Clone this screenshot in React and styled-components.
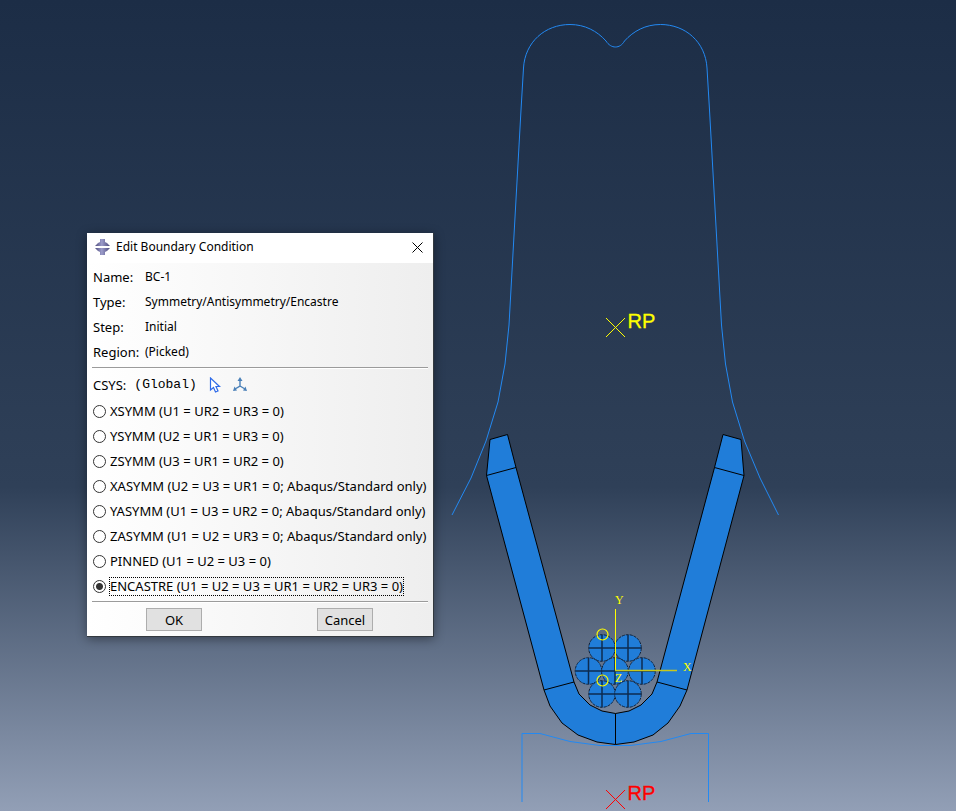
import React, {useState} from "react";
import styled, {createGlobalStyle} from "styled-components";

const GlobalStyle = createGlobalStyle`
  * {
    box-sizing: border-box;
  }
  body {
    margin: 0;
    overflow: hidden;
    font-family: "Noto Sans", "Open Sans", sans-serif;
    font-size: 13px;
    line-height: 18px;
    color: #000;
  }
`;

const Viewport = styled.main`
  position: relative;
  height: 100vh;
  background: linear-gradient(#1c2d46 0%, #2f4058 60%, #929fb6 100%);
`;

const Canvas = styled.svg`
  display: block;
  width: 100%;
  height: 100%;
`;

const Wire = styled.path`
  fill: none;
  stroke: #2389f2;
  stroke-width: 1;
`;

const Solid = styled.polygon`
  fill: #207dd9;
  stroke: #000;
  stroke-width: 1;
  stroke-linejoin: round;
`;

const Edge = styled.path`
  fill: none;
  stroke: ${props => props.color || "#000"};
  stroke-width: ${props => props.$width || 1};
`;

const Strand = styled.circle`
  fill: #207dd9;
  stroke: #10233c;
  stroke-width: 1;
  stroke-dasharray: 3 1;
`;

const PointLabel = styled.text`
  font-family: "Liberation Sans", Arial, sans-serif;
  font-size: 20px;
  fill: ${props => props.color};
  stroke: ${props => props.color};
  stroke-width: 0.3;
`;

const AxisLabel = styled.text`
  font-family: "Liberation Serif", serif;
  font-size: 12px;
  fill: #ff0;
`;

const Dialog = styled.section`
  position: absolute;
  left: 87px;
  top: 233px;
  width: 347px;
  border-right: 1px solid #33393f;
  border-bottom: 1px solid #33393f;
  background: linear-gradient(to right, #fff, #eee);
  box-shadow: 0 2px 10px rgba(0, 0, 0, 0.4);
`;

const TitleBar = styled.header`
  display: flex;
  align-items: center;
  height: 30px;
  padding: 0 8px 2px;
  background: #fff;
`;

const Title = styled.h1`
  flex: 1;
  margin: 0 0 0 5px;
  font-size: 12px;
  font-weight: 400;
`;

const CloseButton = styled.button`
  display: flex;
  padding: 2px;
  border: none;
  background: none;
`;

const Details = styled.dl`
  display: grid;
  grid-template-columns: 52px 1fr;
  grid-auto-rows: 25px;
  align-items: center;
  margin: 0;
  padding: 1px 6px 3px;
`;

const Term = styled.dt``;

const Value = styled.dd`
  margin: 0;
  font-size: 12px;
`;

const Divider = styled.hr`
  height: 2px;
  margin: 0 5px;
  border: none;
  border-top: 1px solid #9b9b9b;
  background: #fff;
`;

const CsysRow = styled.div`
  display: flex;
  align-items: center;
  height: 25px;
  margin: 3px 6px 2px;
`;

const CsysValue = styled.span`
  margin: 0 8px;
  font-family: "Liberation Mono", monospace;
`;

const ToolButton = styled.button`
  display: flex;
  margin-right: 5px;
  padding: 2px;
  border: none;
  background: none;
`;

const Options = styled.fieldset`
  margin: 0;
  padding: 0 6px 2px;
  border: none;
`;

const Option = styled.label`
  display: flex;
  align-items: center;
  gap: 4px;
  height: 25px;
  white-space: nowrap;
`;

const Radio = styled.input`
  appearance: none;
  flex: none;
  width: 13px;
  height: 13px;
  margin: 0;
  border: 1px solid #333;
  border-radius: 50%;
  background: #fff;

  &:checked {
    background: radial-gradient(circle, #333 3px, #fff 4px);
  }
`;

const OptionText = styled.span`
  padding-bottom: 1px;
  line-height: 16px;
  outline: ${props => props.$active ? "1px dotted #000" : "none"};
`;

const Actions = styled.footer`
  display: flex;
  justify-content: space-between;
  padding: 5px 60px 5px 59px;
`;

const ActionButton = styled.button`
  width: 56px;
  height: 23px;
  padding: 0;
  border: 1px solid #adadad;
  background: #e1e1e1;
  font: inherit;
  color: #000;
`;

const details = [
    ["Name:", "BC-1"],
    ["Type:", "Symmetry/Antisymmetry/Encastre"],
    ["Step:", "Initial"],
    ["Region:", "(Picked)"]
];

const conditions = [
    ["XSYMM", "(U1 = UR2 = UR3 = 0)"],
    ["YSYMM", "(U2 = UR1 = UR3 = 0)"],
    ["ZSYMM", "(U3 = UR1 = UR2 = 0)"],
    ["XASYMM", "(U2 = U3 = UR1 = 0; Abaqus/Standard only)"],
    ["YASYMM", "(U1 = U3 = UR2 = 0; Abaqus/Standard only)"],
    ["ZASYMM", "(U1 = U2 = UR3 = 0; Abaqus/Standard only)"],
    ["PINNED", "(U1 = U2 = U3 = 0)"],
    ["ENCASTRE", "(U1 = U2 = U3 = UR1 = UR2 = UR3 = 0)"]
];

const strands = [[602, 648], [628, 648], [588.5, 671], [615, 671], [642, 671], [602, 694], [628, 694]];

function ReferencePoint({x, y, color}) {
    return (
        <g>
            <Edge color={color} d={`M${x - 9.5} ${y - 9.5}l19 19m0-19l-19 19`}/>
            <PointLabel color={color} x={x + 12} y={y}>RP</PointLabel>
        </g>
    );
}

function Model() {
    return (
        <Canvas viewBox="0 0 956 811" role="img" aria-label="Model view">
            {/* punch and die outlines */}
            <Wire d="M452 515L471 478L486 441L498 402L505 364L509 325L521 110L523.5 68C525 42 545 24.500 570 24.500C585 24.500 597 31 606 41C611 49 620 49 624.500 41C633.500 31 645.500 24.500 660.500 24.500C685.500 24.500 705.500 42 707 68L709.500 110L721.500 325L725.500 364L732.500 402L744.500 441L760 478L778.500 515"/>
            <Wire d="M522 802V733.500H540L570 741.500L600 745.500H630L661 741.500L691 733.500H708.500V802"/>

            {/* terminal barrel */}
            <Solid points="490,439.5 507.5,434.5 516,467.5 574,682 579,694 590,705 602,711 615.5,713.5 629,711 641,705 652,694 657,682 714.5,467.5 723,434.5 741,439.5 744,475.5 687,690 680,706 668,723 653,735 634,742 615.5,744.5 597,742 578,735 562,723 550,706 544,690 486.5,475.5"/>
            <Edge d="M486.5 475.5L516 467.5M714.5 467.5L744 475.5M544 690L574 682M657 682L687 690M615.5 713.5V744.5"/>

            {/* wire strands */}
            {strands.map(([x, y]) => (
                <g key={`${x}-${y}`}>
                    <Strand cx={x} cy={y} r="13.3"/>
                    <Edge color="#0c2b50" $width={1.5} d={`M${x - 13} ${y}h26M${x} ${y - 13}v26`}/>
                </g>
            ))}

            <Edge color="#ff0" d="M615.5 609V671"/>
            <Edge color="#c8c81e" $width={1.5} d="M615 670.5H677"/>
            <circle cx="602.5" cy="634.5" r="5.5" fill="none" stroke="#ff0" strokeWidth="1.2"/>
            <circle cx="602.5" cy="680.5" r="5.5" fill="none" stroke="#ff0" strokeWidth="1.2"/>
            <AxisLabel x="615" y="604">Y</AxisLabel>
            <AxisLabel x="683" y="671">X</AxisLabel>
            <AxisLabel x="615" y="682">Z</AxisLabel>

            <ReferencePoint x={615.5} y={327.5} color="#ff0"/>
            <ReferencePoint x={615.5} y={799.5} color="#f00"/>
        </Canvas>
    );
}

function AppIcon() {
    return (
        <svg width="16" height="16" viewBox="0 0 16 16" aria-hidden="true">
            <defs>
                <linearGradient id="metal">
                    <stop offset="0" stopColor="#4c4a7c"/>
                    <stop offset="0.45" stopColor="#9c9cca"/>
                    <stop offset="1" stopColor="#4c4a7c"/>
                </linearGradient>
            </defs>
            <path fill="url(#metal)" d="M5 0h5v3l2 1 3 3H0l3-3 2-1zM0 9h15l-3 3-2 1v3H5v-3l-2-1z"/>
        </svg>
    );
}

function App() {
    const [condition, setCondition] = useState("ENCASTRE");

    return (
        <Viewport>
            <GlobalStyle/>
            <Model/>
            <Dialog role="dialog" aria-labelledby="dialog-title">
                <TitleBar>
                    <AppIcon/>
                    <Title id="dialog-title">Edit Boundary Condition</Title>
                    <CloseButton aria-label="Close">
                        <svg width="11" height="11" viewBox="0 0 11 11" fill="none" stroke="#000">
                            <path d="M0.5 0.5l10 10M10.5 0.5l-10 10"/>
                        </svg>
                    </CloseButton>
                </TitleBar>
                <Details>
                    {details.map(([term, value]) => (
                        <React.Fragment key={term}>
                            <Term>{term}</Term>
                            <Value>{value}</Value>
                        </React.Fragment>
                    ))}
                </Details>
                <Divider/>
                <CsysRow>
                    CSYS:
                    <CsysValue>(Global)</CsysValue>
                    <ToolButton aria-label="Select CSYS">
                        <svg width="16" height="16" viewBox="0 0 16 16" fill="#fff" stroke="#2f6be8" strokeWidth="1.2">
                            <path d="M3.5 1v12l3-2.5 2 4.5 2.5-1-2-4.5h3.5z"/>
                        </svg>
                    </ToolButton>
                    <ToolButton aria-label="Create datum CSYS">
                        <svg width="16" height="16" viewBox="0 0 16 16" fill="#4a80b8" stroke="#4a80b8">
                            <path fill="none" strokeWidth="1.4" d="M8 3v6L3 12M8 9l5 3"/>
                            <path stroke="none" d="M8 0l2.500 4h-5zM1 14l1.500-4.500 2.500 4zM15 14l-1.500-4.500-2.500 4z"/>
                        </svg>
                    </ToolButton>
                </CsysRow>
                <Options>
                    {conditions.map(([name, formula]) => (
                        <Option key={name}>
                            <Radio
                                type="radio"
                                name="condition"
                                checked={condition === name}
                                onChange={() => setCondition(name)}
                            />
                            <OptionText $active={condition === name}>{name} {formula}</OptionText>
                        </Option>
                    ))}
                </Options>
                <Divider/>
                <Actions>
                    <ActionButton>OK</ActionButton>
                    <ActionButton>Cancel</ActionButton>
                </Actions>
            </Dialog>
        </Viewport>
    );
}

export default App;
